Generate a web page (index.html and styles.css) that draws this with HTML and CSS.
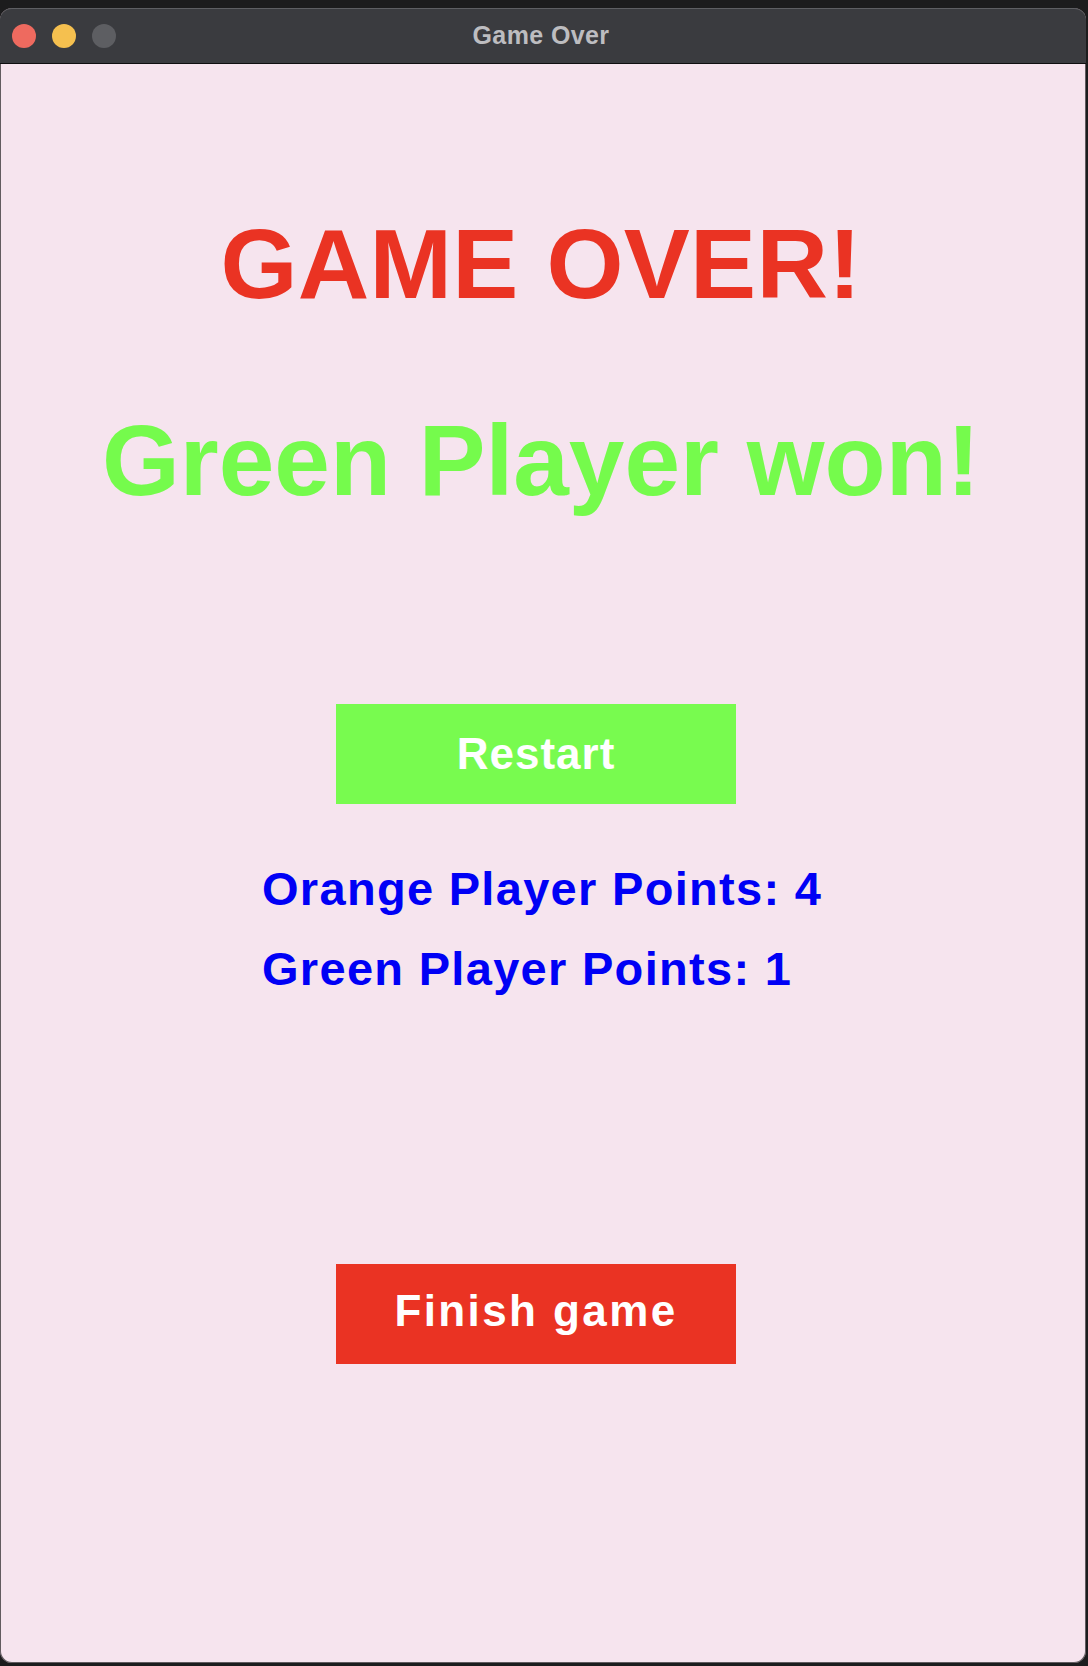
FILE: index.html
```html
<!DOCTYPE html>
<html lang="en">
<head>
<meta charset="utf-8">
<title>Game Over</title>
<link rel="stylesheet" href="styles.css">
</head>
<body>
<div class="window">
  <div class="titlebar">
    <div class="lights">
      <span class="light light-close"></span>
      <span class="light light-min"></span>
      <span class="light light-max"></span>
    </div>
    <div class="title">Game Over</div>
    <div class="spacer"></div>
  </div>
  <div class="content">
    <h1 class="headline headline-over">GAME OVER!</h1>
    <h2 class="headline headline-winner">Green Player won!</h2>
    <button class="btn btn-restart">Restart</button>
    <div class="scores">
      <p class="score">Orange Player Points: 4</p>
      <p class="score">Green Player Points: 1</p>
    </div>
    <button class="btn btn-finish">Finish game</button>
  </div>
</div>
</body>
</html>
```

FILE: styles.css
```css
html, body {
  margin: 0;
  padding: 0;
}

body {
  background: #1c1c1d;
  width: 1088px;
  height: 1666px;
  overflow: hidden;
  font-family: "Liberation Sans", Arial, sans-serif;
}

.window {
  margin-top: 8px;
  width: 1086px;
  height: 1655px;
  border-radius: 12px;
  overflow: hidden;
  background: #f6e4ee;
  box-shadow: inset 0 0 0 1px rgba(0, 0, 0, 0.6);
  display: flex;
  flex-direction: column;
}

.titlebar {
  flex: none;
  background: #3a3b3f;
  border-bottom: 1px solid #0e0e0f;
  border-top: 1px solid #5e5f63;
  border-radius: 12px 12px 0 0;
  box-sizing: border-box;
  height: 56px;
  display: grid;
  grid-template-columns: 1fr auto 1fr;
  align-items: center;
}

.lights {
  display: flex;
  gap: 16px;
  padding-left: 12px;
}

.light {
  width: 24px;
  height: 24px;
  border-radius: 50%;
  display: block;
}

.light-close { background: #ee6a5f; }
.light-min { background: #f5c04f; }
.light-max { background: #5d5e62; }

.title {
  color: #bdbdc0;
  font-family: "Liberation Sans", Arial, sans-serif;
  font-weight: bold;
  font-size: 25px;
  letter-spacing: 0.4px;
  margin-right: 4px;
  margin-bottom: 2px;
}

.content {
  flex: 1;
  display: flex;
  flex-direction: column;
  align-items: flex-start;
  padding-top: 150px;
}

.headline {
  margin: 0;
  width: 100%;
  text-align: center;
  font-weight: bold;
  line-height: 1;
  padding-right: 4px;
  box-sizing: border-box;
}

.headline-over {
  font-size: 99px;
  letter-spacing: 0.3px;
  color: #ea3323;
}

.headline-winner {
  font-size: 100px;
  color: #75fb4c;
  margin-top: 97px;
}

.btn {
  width: 400px;
  height: 100px;
  margin-left: 336px;
  border: none;
  padding: 0;
  font-family: "Liberation Sans", Arial, sans-serif;
  font-weight: bold;
  font-size: 44px;
  line-height: 1;
  color: #ffffff;
  display: flex;
  align-items: center;
  justify-content: center;
}

.btn-restart {
  margin-top: 194px;
  background: #78fb4f;
  letter-spacing: 1px;
}

.btn-finish {
  margin-top: 255px;
  background: #ea3323;
  letter-spacing: 2.4px;
  padding-bottom: 6px;
}

.scores {
  margin-top: 45px;
  margin-left: 262px;
}

.score {
  margin: 0;
  font-size: 47px;
  line-height: 80px;
  font-weight: bold;
  color: #0000f5;
  letter-spacing: 1.3px;
}
```
